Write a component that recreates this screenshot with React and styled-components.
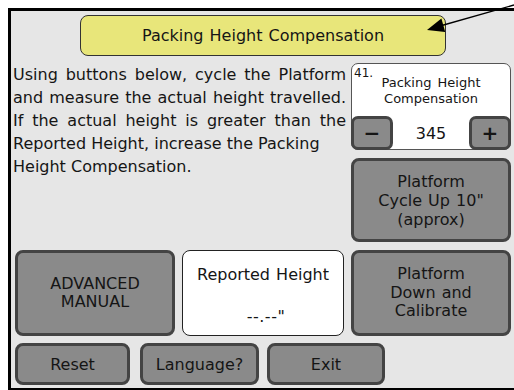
import React from 'react';
import styled, { createGlobalStyle } from 'styled-components';

const GlobalStyle = createGlobalStyle`
  html, body {
    margin: 0;
    background: #ffffff;
    overflow: hidden;
  }
  body {
    padding: 8px 0 0 8px;
    font-family: "DejaVu Sans", "Liberation Sans", sans-serif;
    color: #151515;
  }
`;

const Frame = styled.div`
  width: 499px;
  height: 373px;
  border: 3px solid #000;
  border-right: none;
  background: #e6e6e6;
  padding: 4px 0 0 4px;
  box-sizing: content-box;
`;

const Screen = styled.div`
  width: 499px;
  height: 373px;
  display: flex;
  flex-direction: column;
`;

const TitleBox = styled.div`
  margin-left: 65px;
  width: 366px;
  height: 41px;
  box-sizing: border-box;
  background: #e8e67a;
  border: 1.5px solid #333;
  border-radius: 8px;
  display: flex;
  align-items: center;
  justify-content: center;
  font-size: 16px;
  word-spacing: 1px;
`;

const Main = styled.div`
  margin-top: 7px;
  display: grid;
  grid-template-columns: 160px 162px 160px;
  grid-template-rows: 179px 86px;
  column-gap: 7px;
  row-gap: 8px;
`;

const Instructions = styled.div`
  grid-column: 1 / 3;
  margin-left: -2px;
  width: 333px;
  font-size: 16px;
  line-height: 23px;
`;

const Line = styled.div`
  white-space: nowrap;
  text-align: left;
  text-align-last: ${p => (p.$justify ? 'justify' : 'left')};
`;

const RightStack = styled.div`
  display: flex;
  flex-direction: column;
  gap: 8px;
`;

const Panel = styled.div`
  position: relative;
  height: 87px;
  box-sizing: border-box;
  background: #fff;
  border: 1px solid #555;
  border-radius: 7px;
  display: flex;
  flex-direction: column;
  justify-content: space-between;
`;

const ParamNo = styled.span`
  position: absolute;
  top: 2px;
  left: 2px;
  font-size: 12px;
`;

const PanelTitle = styled.div`
  padding-top: 11px;
  text-align: center;
  font-size: 13px;
  line-height: 16px;
  word-spacing: 2px;
`;

const Stepper = styled.div`
  display: flex;
  align-items: center;
  justify-content: space-between;
  height: 34px;
  margin: 0 -1px -1px -1px;
`;

const Value = styled.span`
  font-size: 16px;
`;

const Button = styled.div`
  box-sizing: border-box;
  width: ${p => p.$w || 'auto'};
  height: ${p => p.$h || 'auto'};
  background: #8a8a8a;
  border: 3px solid #444;
  border-radius: ${p => p.$r || '8px'};
  display: flex;
  align-items: center;
  justify-content: center;
  text-align: center;
  font-size: ${p => p.$fs || '16px'};
  font-weight: ${p => (p.$bold ? 700 : 400)};
  line-height: ${p => p.$lh || '19px'};
  word-spacing: 1px;
`;

const Readout = styled.div`
  box-sizing: border-box;
  background: #fff;
  border: 1px solid #222;
  border-radius: 8px;
  display: flex;
  flex-direction: column;
  align-items: center;
  justify-content: space-between;
  padding: 14px 0 8px;
  font-size: 16px;
  line-height: 20px;
  word-spacing: 1px;
`;

const Dashes = styled.span`
  padding-left: 6px;
  letter-spacing: 0.5px;
`;

const BottomRow = styled.div`
  margin-top: 7px;
  display: flex;
  height: 42px;
`;

const Spacer = styled.div`
  width: ${p => p.$w};
  flex: none;
`;

const Pointer = styled.svg`
  position: absolute;
  top: 0;
  left: 0;
  pointer-events: none;
`;

export default function App() {
  return (
    <>
      <GlobalStyle />
      <Frame>
        <Screen>
          <TitleBox>Packing Height Compensation</TitleBox>
          <Main>
            <Instructions>
              <Line $justify>Using buttons below, cycle the Platform</Line>
              <Line $justify>and measure the actual height travelled.</Line>
              <Line $justify>If the actual height is greater than the</Line>
              <Line>Reported Height, increase the Packing</Line>
              <Line>Height Compensation.</Line>
            </Instructions>
            <RightStack>
              <Panel>
                <ParamNo>41.</ParamNo>
                <PanelTitle>
                  Packing Height
                  <br />
                  Compensation
                </PanelTitle>
                <Stepper>
                  <Button $w="42px" $h="34px" $r="7px" $fs="20px" $bold>−</Button>
                  <Value>345</Value>
                  <Button $w="42px" $h="34px" $r="7px" $fs="20px" $bold>+</Button>
                </Stepper>
              </Panel>
              <Button $h="84px">
                Platform
                <br />
                Cycle Up 10"
                <br />
                (approx)
              </Button>
            </RightStack>
            <Button $lh="18px">
              ADVANCED
              <br />
              MANUAL
            </Button>
            <Readout>
              <span>Reported Height</span>
              <Dashes>--.--"</Dashes>
            </Readout>
            <Button $lh="18.5px">
              Platform
              <br />
              Down and
              <br />
              Calibrate
            </Button>
          </Main>
          <BottomRow>
            <Button $w="115px">Reset</Button>
            <Spacer $w="10px" />
            <Button $w="119px">Language?</Button>
            <Spacer $w="8px" />
            <Button $w="118px">Exit</Button>
          </BottomRow>
        </Screen>
      </Frame>
      <Pointer width="514" height="50" viewBox="0 0 514 50">
        <line x1="514" y1="5" x2="440" y2="26" stroke="#000" strokeWidth="1.3" />
        <polygon points="427,30 441.4,18.6 445.2,32" fill="#000" />
      </Pointer>
    </>
  );
}
